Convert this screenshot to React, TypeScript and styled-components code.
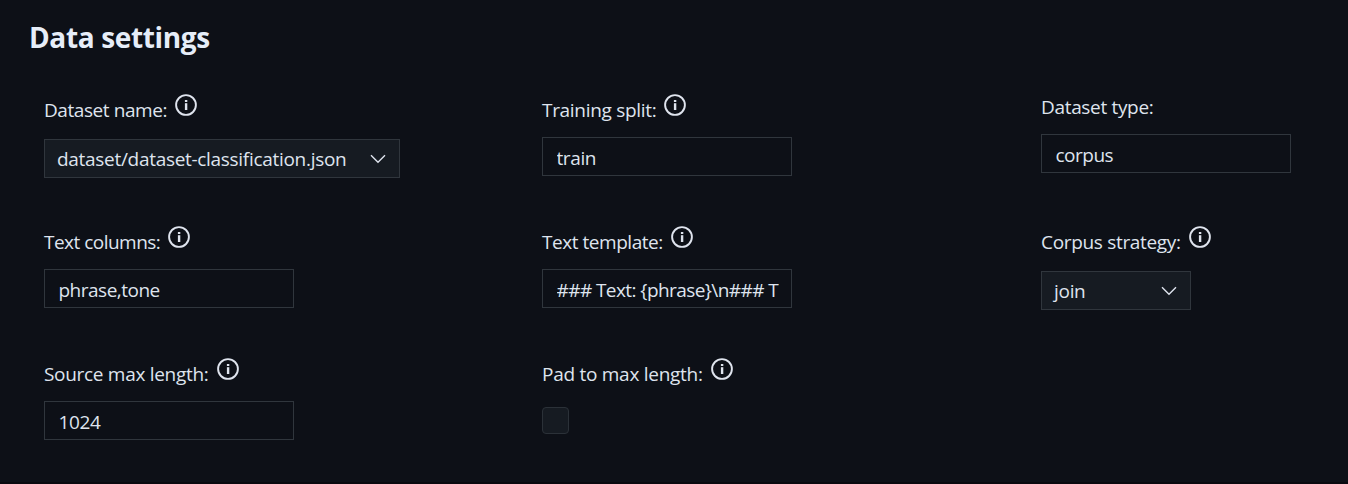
import React from "react";
import styled, { createGlobalStyle } from "styled-components";

const GlobalStyle = createGlobalStyle`
  * { box-sizing: border-box; }
  body {
    margin: 0;
    background: #0d1017;
    color: #dfe4ee;
    font-family: "Open Sans", "Noto Sans", sans-serif;
    font-size: 19px;
  }
`;

const Panel = styled.section`
  display: flex;
  flex-direction: column;
  height: 484px;
  padding: 17px 0 0 30px;
  border-bottom: 2px solid #09090f;
  overflow: hidden;
`;

const Heading = styled.h2<{ $track: number }>`
  margin: 0 0 27px -1px;
  height: 40px;
  line-height: 40px;
  font-size: 28px;
  font-weight: 700;
  color: #e6edf8;
  letter-spacing: ${(p) => p.$track}px;
`;

const Grid = styled.div`
  display: grid;
  grid-template-columns: 498px 499px 1fr;
  grid-auto-rows: 132px;
`;

const Field = styled.div`
  display: flex;
  flex-direction: column;
  align-items: flex-start;
  padding-left: 14px;
`;

const LabelRow = styled.div<{ $info: boolean }>`
  display: flex;
  align-items: flex-start;
  height: ${(p) => (p.$info ? 53 : 50)}px;
  padding-top: ${(p) => (p.$info ? 10 : 7)}px;
`;

const LabelText = styled.label<{ $width: number; $track: number }>`
  width: ${(p) => p.$width}px;
  line-height: 32px;
  white-space: nowrap;
  letter-spacing: ${(p) => p.$track}px;
`;

const InfoSvg = styled.svg`
  display: block;
  flex: none;
  width: 22px;
  height: 22px;
`;

const TextInput = styled.input<{ $track: number }>`
  width: 250px;
  height: 39px;
  padding: 3px 12px 0 13.5px;
  border: 1px solid #30363d;
  border-radius: 0;
  outline: none;
  background: transparent;
  color: inherit;
  font: inherit;
  letter-spacing: ${(p) => p.$track}px;
`;

const SelectBox = styled.div<{ $width: number; $track: number }>`
  display: flex;
  align-items: center;
  justify-content: space-between;
  width: ${(p) => p.$width}px;
  height: 39px;
  margin-top: 2px;
  padding: 0 13px 0 12px;
  border: 1px solid #30363d;
  background: #161b22;
  white-space: nowrap;
  letter-spacing: ${(p) => p.$track}px;
`;

const ChevronSvg = styled.svg`
  display: block;
  flex: none;
  width: 16px;
  height: 10px;
`;

const Checkbox = styled.div`
  width: 27px;
  height: 27px;
  margin-top: 6px;
  border: 1px solid #2b3138;
  border-radius: 4px;
  background: #161b22;
`;

const InfoIcon = () => (
  <InfoSvg viewBox="0 0 22 22" fill="none">
    <circle cx="11" cy="11" r="9.9" stroke="#dfe4ee" strokeWidth="1.9" />
    <rect x="9.9" y="6" width="2.4" height="2" fill="#dfe4ee" />
    <rect x="9.9" y="9.2" width="2.4" height="6.8" fill="#dfe4ee" />
  </InfoSvg>
);

const Chevron = () => (
  <ChevronSvg viewBox="0 0 16 10" fill="none">
    <path d="M1 1.2 L8 8.2 L15 1.2" stroke="#dfe4ee" strokeWidth="1.4" />
  </ChevronSvg>
);

type FieldSpec = {
  label: string;
  labelWidth: number;
  labelTrack: number;
  info: boolean;
  kind: "text" | "select" | "check";
  value?: string;
  valueTrack?: number;
  width?: number;
};

const fields: FieldSpec[] = [
  { label: "Dataset name:", labelWidth: 131, labelTrack: -0.43, info: true, kind: "select", value: "dataset/dataset-classification.json", valueTrack: -0.3, width: 356 },
  { label: "Training split:", labelWidth: 122, labelTrack: -0.31, info: true, kind: "text", value: "train", valueTrack: -0.4 },
  { label: "Dataset type:", labelWidth: 120, labelTrack: -0.33, info: false, kind: "text", value: "corpus", valueTrack: -0.5 },
  { label: "Text columns:", labelWidth: 124, labelTrack: -0.52, info: true, kind: "text", value: "phrase,tone", valueTrack: -0.5 },
  { label: "Text template:", labelWidth: 128.5, labelTrack: -0.46, info: true, kind: "text", value: "### Text: {phrase}\\n### T", valueTrack: -0.57 },
  { label: "Corpus strategy:", labelWidth: 148, labelTrack: -0.32, info: true, kind: "select", value: "join", valueTrack: -0.3, width: 150 },
  { label: "Source max length:", labelWidth: 173, labelTrack: -0.3, info: true, kind: "text", value: "1024", valueTrack: -0.35 },
  { label: "Pad to max length:", labelWidth: 169, labelTrack: -0.27, info: true, kind: "check" },
];

const SettingsField = ({ field }: { field: FieldSpec }) => (
  <Field>
    <LabelRow $info={field.info}>
      <LabelText $width={field.labelWidth} $track={field.labelTrack}>
        {field.label}
      </LabelText>
      {field.info && <InfoIcon />}
    </LabelRow>
    {field.kind === "text" && (
      <TextInput readOnly value={field.value} $track={field.valueTrack ?? 0} />
    )}
    {field.kind === "select" && (
      <SelectBox $width={field.width ?? 150} $track={field.valueTrack ?? 0}>
        <span>{field.value}</span>
        <Chevron />
      </SelectBox>
    )}
    {field.kind === "check" && <Checkbox role="checkbox" aria-checked={false} />}
  </Field>
);

export default function App() {
  return (
    <>
      <GlobalStyle />
      <Panel>
        <Heading $track={-0.36}>Data settings</Heading>
        <Grid>
          {fields.map((f) => (
            <SettingsField key={f.label} field={f} />
          ))}
        </Grid>
      </Panel>
    </>
  );
}
